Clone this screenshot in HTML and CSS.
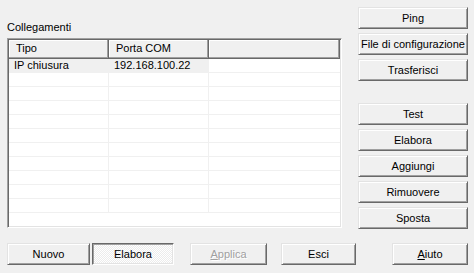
FILE: index.html
```html
<!DOCTYPE html>
<html lang="it">
<head>
  <meta charset="UTF-8" />
  <title>Collegamenti</title>
  <link rel="stylesheet" href="styles.css">
</head>
<body>
  <div class="main">
    <div class="left">
      <div class="caption">Collegamenti</div>
      <div class="list">
        <div class="list-head">
          <div class="hcell c1">Tipo</div>
          <div class="hcell c2">Porta COM</div>
          <div class="hcell c3"></div>
        </div>
        <div class="row selected">
          <div class="cell c1">IP chiusura</div>
          <div class="cell c2">192.168.100.22</div>
          <div class="cell c3"></div>
        </div>
        <div class="row"><div class="cell c1"></div><div class="cell c2"></div><div class="cell c3"></div></div>
        <div class="row"><div class="cell c1"></div><div class="cell c2"></div><div class="cell c3"></div></div>
        <div class="row"><div class="cell c1"></div><div class="cell c2"></div><div class="cell c3"></div></div>
        <div class="row"><div class="cell c1"></div><div class="cell c2"></div><div class="cell c3"></div></div>
        <div class="row"><div class="cell c1"></div><div class="cell c2"></div><div class="cell c3"></div></div>
        <div class="row"><div class="cell c1"></div><div class="cell c2"></div><div class="cell c3"></div></div>
        <div class="row"><div class="cell c1"></div><div class="cell c2"></div><div class="cell c3"></div></div>
        <div class="row"><div class="cell c1"></div><div class="cell c2"></div><div class="cell c3"></div></div>
        <div class="row"><div class="cell c1"></div><div class="cell c2"></div><div class="cell c3"></div></div>
        <div class="row"><div class="cell c1"></div><div class="cell c2"></div><div class="cell c3"></div></div>
      </div>
    </div>

    <div class="side">
      <div class="group">
        <button class="btn">Ping</button>
        <button class="btn">File di configurazione</button>
        <button class="btn">Trasferisci</button>
      </div>
      <div class="group">
        <button class="btn">Test</button>
        <button class="btn">Elabora</button>
        <button class="btn">Aggiungi</button>
        <button class="btn">Rimuovere</button>
        <button class="btn">Sposta</button>
      </div>
    </div>
  </div>

  <div class="bottom">
    <button class="btn w-nuovo">Nuovo</button>
    <button class="btn pressed w-elabora">Elabora</button>
    <button class="btn disabled w-applica"><u>A</u>pplica</button>
    <button class="btn w-esci">Esci</button>
    <button class="btn w-aiuto"><u>A</u>iuto</button>
  </div>
</body>
</html>
```

FILE: styles.css
```css
body {
  margin: 0;
  width: 474px;
  height: 273px;
  background-color: #f0f0f0;
  font-family: "Liberation Sans", Arial, sans-serif;
  font-size: 11px;
  color: #000;
  overflow: hidden;
}

.main {
  display: flex;
  padding: 7px 0 0 7px;
}

.left {
  width: 335px;
}

.caption {
  margin-top: 13px;
  height: 18px;
  line-height: 14px;
}

.list {
  width: 335px;
  height: 190px;
  box-sizing: border-box;
  background: #fff;
  border: 1px solid;
  border-color: #a0a0a0 #fff #fff #a0a0a0;
  box-shadow: inset 1px 1px #696969, inset -1px -1px #e3e3e3;
  padding: 1px;
  overflow: hidden;
}

.list-head {
  display: flex;
  height: 19px;
  background: #f0f0f0;
}

.hcell {
  box-sizing: border-box;
  height: 19px;
  line-height: 17px;
  padding-left: 7px;
  border-right: 1px solid #696969;
  border-bottom: 1px solid #696969;
  box-shadow: inset -1px -1px #a0a0a0, inset 1px 1px #fff;
}

.c1 { width: 100px; }
.c2 { width: 100px; }
.c3 { flex: 1; }

.row {
  display: flex;
  height: 14px;
}

.cell {
  box-sizing: border-box;
  height: 14px;
  line-height: 13px;
  padding-left: 5px;
  border-right: 1px solid #f0f0f0;
  border-bottom: 1px solid #f0f0f0;
}

.row .c3 {
  border-right: none;
}

.selected .c1,
.selected .c2 {
  background: #f0f0f0;
}

.side {
  margin-left: 16px;
  width: 110px;
}

.group {
  display: flex;
  flex-direction: column;
  gap: 4px;
}

.group + .group {
  margin-top: 22px;
}

.btn {
  display: block;
  box-sizing: border-box;
  width: 110px;
  height: 22px;
  padding: 0;
  font-family: inherit;
  font-size: 11px;
  color: #000;
  background-color: #f0f0f0;
  border: 1px solid;
  border-color: #e3e3e3 #696969 #696969 #e3e3e3;
  box-shadow: inset 1px 1px #fff, inset -1px -1px #a0a0a0;
}

.btn.pressed {
  border-color: #696969 #fff #fff #696969;
  box-shadow: inset 1px 1px #a0a0a0, inset -1px -1px #e3e3e3;
  background: repeating-conic-gradient(#fff 0 25%, #ececec 0 50%) 0 0 / 2px 2px;
}

.btn.disabled {
  color: #a0a0a0;
  text-shadow: 1px 1px #fff;
}

.bottom {
  display: flex;
  padding: 14px 0 0 7px;
}

.w-nuovo { width: 83px; }
.w-elabora { width: 82px; margin-left: 2px; }
.w-applica { width: 77px; margin-left: 16px; }
.w-esci { width: 75px; margin-left: 14px; }
.w-aiuto { width: 76px; margin-left: 36px; }
```
